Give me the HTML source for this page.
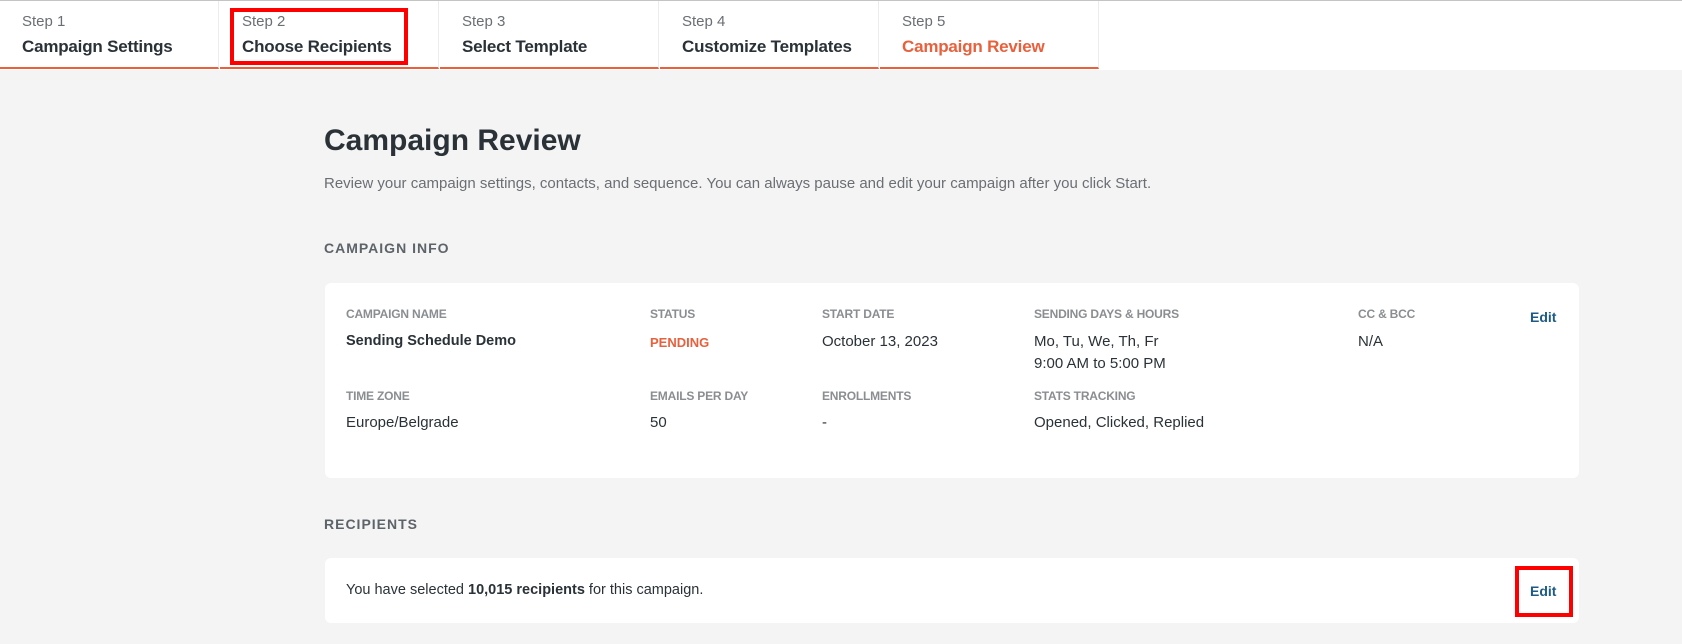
<!DOCTYPE html>
<html><head><meta charset="utf-8"><style>
*{box-sizing:border-box;margin:0;padding:0}
body{width:1682px;height:644px;background:#f4f4f4;font-family:"Liberation Sans",Arial,sans-serif;color:#2a3238;position:relative;overflow:hidden}
.top{position:absolute;left:0;top:0;width:1682px;height:70px;background:#fff;border-top:1px solid #c4c4c4}
.tab{position:absolute;top:1px;width:219px;height:68px;border-right:1px solid #ececec;border-bottom:2px solid #e8603c;background:#fff}
.tab .s{position:absolute;left:22px;top:12px;font-size:15px;color:#6a6f73}
.tab .t{position:absolute;left:22px;top:36px;font-size:17px;font-weight:bold;color:#2a3238;letter-spacing:-0.2px}
.abs{position:absolute;white-space:nowrap}
.card{position:absolute;background:#fff;border-radius:6px}
.lbl{font-size:12px;font-weight:bold;color:#8a8e91;letter-spacing:-0.2px}
.val{font-size:15px;color:#2a3238}
.edit{font-size:14px;font-weight:bold;color:#1d5a85}
.red{position:absolute;border:4px solid #f00}
</style></head><body>
<div class="top"></div>
<div class="tab" style="left:0"><div class="s">Step 1</div><div class="t">Campaign Settings</div></div>
<div class="tab" style="left:220px"><div class="s">Step 2</div><div class="t">Choose Recipients</div></div>
<div class="tab" style="left:440px"><div class="s">Step 3</div><div class="t">Select Template</div></div>
<div class="tab" style="left:660px"><div class="s">Step 4</div><div class="t">Customize Templates</div></div>
<div class="tab" style="left:880px"><div class="s">Step 5</div><div class="t" style="color:#e8603c">Campaign Review</div></div>
<div class="red" style="left:230px;top:8px;width:178px;height:57px"></div>

<div class="abs" style="left:324px;top:124px;font-size:30px;font-weight:bold">Campaign Review</div>
<div class="abs" style="left:324px;top:175px;font-size:15px;color:#6a6f73">Review your campaign settings, contacts, and sequence. You can always pause and edit your campaign after you click Start.</div>
<div class="abs" style="left:324px;top:240px;font-size:14px;font-weight:bold;color:#5d6469;letter-spacing:1px">CAMPAIGN INFO</div>

<div class="card" style="left:325px;top:283px;width:1254px;height:195px"></div>
<div class="abs lbl" style="left:346px;top:307px">CAMPAIGN NAME</div>
<div class="abs lbl" style="left:650px;top:307px">STATUS</div>
<div class="abs lbl" style="left:822px;top:307px">START DATE</div>
<div class="abs lbl" style="left:1034px;top:307px">SENDING DAYS &amp; HOURS</div>
<div class="abs lbl" style="left:1358px;top:307px">CC &amp; BCC</div>
<div class="abs edit" style="left:1530px;top:309px">Edit</div>
<div class="abs val" style="left:346px;top:333px;font-weight:bold;font-size:14.5px">Sending Schedule Demo</div>
<div class="abs" style="left:650px;top:335px;font-size:13px;font-weight:bold;color:#e8603c">PENDING</div>
<div class="abs val" style="left:822px;top:333px">October 13, 2023</div>
<div class="abs val" style="left:1034px;top:333px">Mo, Tu, We, Th, Fr</div>
<div class="abs val" style="left:1034px;top:355px">9:00 AM to 5:00 PM</div>
<div class="abs val" style="left:1358px;top:333px">N/A</div>
<div class="abs lbl" style="left:346px;top:389px">TIME ZONE</div>
<div class="abs lbl" style="left:650px;top:389px">EMAILS PER DAY</div>
<div class="abs lbl" style="left:822px;top:389px">ENROLLMENTS</div>
<div class="abs lbl" style="left:1034px;top:389px">STATS TRACKING</div>
<div class="abs val" style="left:346px;top:414px">Europe/Belgrade</div>
<div class="abs val" style="left:650px;top:414px">50</div>
<div class="abs val" style="left:822px;top:414px">-</div>
<div class="abs val" style="left:1034px;top:414px">Opened, Clicked, Replied</div>

<div class="abs" style="left:324px;top:516px;font-size:14px;font-weight:bold;color:#5d6469;letter-spacing:1px">RECIPIENTS</div>
<div class="card" style="left:325px;top:558px;width:1254px;height:65px"></div>
<div class="abs val" style="left:346px;top:582px;font-size:14.5px">You have selected <b>10,015 recipients</b> for this campaign.</div>
<div class="abs edit" style="left:1530px;top:583px">Edit</div>
<div class="red" style="left:1515px;top:566px;width:58px;height:51px"></div>
</body></html>
